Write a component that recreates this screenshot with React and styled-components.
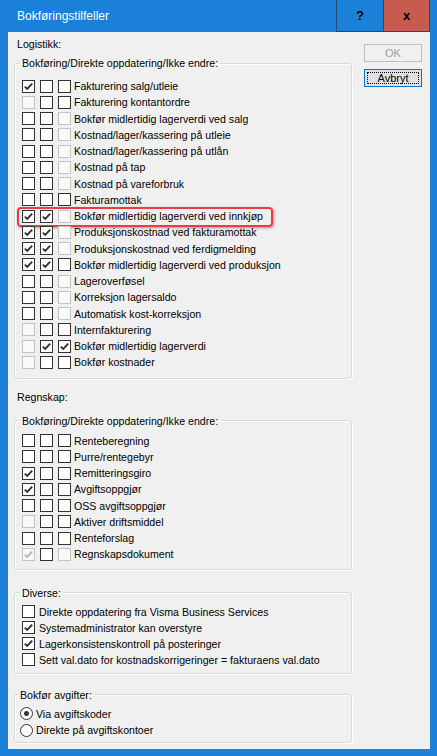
import React from "react";
import styled, { createGlobalStyle } from "styled-components";

const Global = createGlobalStyle`
  html, body { margin: 0; padding: 0; background: #1b80d8; }
  body { font-family: "Liberation Sans", Arial, sans-serif; }
  * { box-sizing: border-box; }
`;

const Window = styled.div`
  width: 437px;
  height: 756px;
  background: #1b80d8;
  display: flex;
  flex-direction: column;
  padding: 0 7px 7px 8px;
`;

const TitleBar = styled.div`
  height: 32px;
  flex: none;
  display: flex;
  align-items: stretch;
  margin-left: -8px;
`;

const Title = styled.div`
  flex: 1;
  color: #fff;
  font-size: 12px;
  padding-left: 17px;
  display: flex;
  align-items: center;
  padding-bottom: 1px;
`;

const CaptionButton = styled.div`
  width: ${(p) => p.$w}px;
  height: 32px;
  background: ${(p) => p.$bg};
  border: 1px solid #1c4d7c;
  border-top: none;
  margin-left: -1px;
  display: flex;
  align-items: center;
  justify-content: center;
  font-weight: bold;
  font-size: 13px;
  color: #000;
`;

const Client = styled.div`
  flex: 1;
  background: #f0f0f0;
  display: flex;
  font-size: 10.6px;
  color: #000;
`;

const LeftCol = styled.div`
  width: 346px;
  padding: 6px 0 0 6px;
  display: flex;
  flex-direction: column;
`;

const RightCol = styled.div`
  flex: 1;
  padding: 12px 8px 0 12px;
  display: flex;
  flex-direction: column;
  gap: 7px;
`;

const Button = styled.div`
  height: 18px;
  width: 58px;
  display: flex;
  align-items: center;
  justify-content: center;
  font-size: 11px;
  border: 1px solid ${(p) => (p.$disabled ? "#bfbfbf" : "#0078d7")};
  background: ${(p) => (p.$disabled ? "#f0f0f0" : "#e1e1e1")};
  color: ${(p) => (p.$disabled ? "#a0a0a0" : "#000")};
  position: relative;
  ${(p) =>
    p.$focused &&
    `&::after { content: ""; position: absolute; inset: 2px; border: 1px dotted #000; }`}
`;

const SectionLabel = styled.div`
  height: 13px;
  line-height: 13px;
  padding-left: 3px;
  margin-top: ${(p) => p.$mt || 0}px;
`;

const Group = styled.fieldset`
  margin: ${(p) => p.$mt || 0}px 0 0 0;
  padding: ${(p) => p.$pt}px 0 ${(p) => p.$pb}px ${(p) => p.$pl}px;
  border: 1px solid #d5dbe0;
  border-radius: 3px;
  box-shadow: inset 1px 1px 0 #fff, 1px 1px 0 #fff;
  min-width: 0;
`;

const Legend = styled.legend`
  padding: 0 2px;
  margin-left: -2px;
  line-height: 14px;
  height: 14px;
`;

const Row = styled.div`
  height: ${(p) => p.$h}px;
  display: flex;
  align-items: center;
  gap: 5px;
  position: relative;
  white-space: nowrap;
  ${(p) =>
    p.$highlight &&
    `&::after {
      content: "";
      position: absolute;
      left: -5px;
      width: 252px;
      top: -1.5px;
      height: 16px;
      border: 2px solid #ee3a43;
      border-radius: 4px;
      box-shadow: 1px 1px 3px rgba(0,0,0,0.35);
      pointer-events: none;
    }`}
`;

const RowText = styled.span`
  margin-left: ${(p) => p.$ml ?? -2}px;
`;

const Box = styled.span`
  width: 13px;
  height: 13px;
  flex: none;
  border: 1px solid ${(p) => (p.$disabled ? "#c3c3c3" : "#333")};
  background: ${(p) => (p.$disabled ? "#f9f9f9" : "#fff")};
  display: flex;
  align-items: center;
  justify-content: center;
`;

const Radio = styled.span`
  width: 13px;
  height: 13px;
  flex: none;
  border-radius: 50%;
  border: 1px solid #333;
  background: #fff;
  display: flex;
  align-items: center;
  justify-content: center;
  &::after {
    content: "";
    width: 5px;
    height: 5px;
    border-radius: 50%;
    background: ${(p) => (p.$checked ? "#333" : "transparent")};
  }
`;

const Check = ({ color }) => (
  <svg width="11" height="11" viewBox="0 0 11 11">
    <path d="M1.8 5.6 L4.2 8 L9.2 2.6" fill="none" stroke={color} strokeWidth="1.9" />
  </svg>
);

const CheckBox = ({ s }) => {
  const disabled = s.startsWith("d");
  const checked = s.endsWith("c");
  return (
    <Box $disabled={disabled}>
      {checked && <Check color={disabled ? "#b8b8b8" : "#333"} />}
    </Box>
  );
};

const logistikk = [
  ["Fakturering salg/utleie", "c e e"],
  ["Fakturering kontantordre", "d e e"],
  ["Bokfør midlertidig lagerverdi ved salg", "e e d"],
  ["Kostnad/lager/kassering på utleie", "e e d"],
  ["Kostnad/lager/kassering på utlån", "e e d"],
  ["Kostnad på tap", "e e d"],
  ["Kostnad på vareforbruk", "e e d"],
  ["Fakturamottak", "e e e"],
  ["Bokfør midlertidig lagerverdi ved innkjøp", "c c d", true],
  ["Produksjonskostnad ved fakturamottak", "c c d"],
  ["Produksjonskostnad ved ferdigmelding", "c c d"],
  ["Bokfør midlertidig lagerverdi ved produksjon", "c c e"],
  ["Lageroverføsel", "e e d"],
  ["Korreksjon lagersaldo", "e e d"],
  ["Automatisk kost-korreksjon", "e e d"],
  ["Internfakturering", "d e e"],
  ["Bokfør midlertidig lagerverdi", "d c c"],
  ["Bokfør kostnader", "d e e"],
];

const regnskap = [
  ["Renteberegning", "e e e"],
  ["Purre/rentegebyr", "e e e"],
  ["Remitteringsgiro", "c e e"],
  ["Avgiftsoppgjør", "c e e"],
  ["OSS avgiftsoppgjør", "e e e"],
  ["Aktiver driftsmiddel", "d e e"],
  ["Renteforslag", "e e e"],
  ["Regnskapsdokument", "dc e d"],
];

const diverse = [
  ["Direkte oppdatering fra Visma Business Services", "e"],
  ["Systemadministrator kan overstyre", "c"],
  ["Lagerkonsistenskontroll på posteringer", "c"],
  ["Sett val.dato for kostnadskorrigeringer = fakturaens val.dato", "e"],
];

const TripleRows = ({ rows }) =>
  rows.map(([label, states, hl]) => (
    <Row key={label} $h={16.25} $highlight={hl}>
      {states.split(" ").map((s, i) => (
        <CheckBox key={i} s={s} />
      ))}
      <RowText>{label}</RowText>
    </Row>
  ));

export default function App() {
  return (
    <>
      <Global />
      <Window>
        <TitleBar>
          <Title>Bokføringstilfeller</Title>
          <CaptionButton $w={48} $bg="#1b80d8">?</CaptionButton>
          <CaptionButton $w={47} $bg="#c75b50">x</CaptionButton>
        </TitleBar>
        <Client>
          <LeftCol>
            <SectionLabel>Logistikk:</SectionLabel>
            <Group $mt={5} $pt={8} $pb={7} $pl={7}>
              <Legend>Bokføring/Direkte oppdatering/Ikke endre:</Legend>
              <TripleRows rows={logistikk} />
            </Group>
            <SectionLabel $mt={12}>Regnskap:</SectionLabel>
            <Group $mt={10} $pt={5} $pb={6} $pl={7}>
              <Legend>Bokføring/Direkte oppdatering/Ikke endre:</Legend>
              <TripleRows rows={regnskap} />
            </Group>
            <Group $mt={16} $pt={4} $pb={5} $pl={7}>
              <Legend>Diverse:</Legend>
              {diverse.map(([label, s]) => (
                <Row key={label} $h={16}>
                  <CheckBox s={s} />
                  <RowText $ml={-1}>{label}</RowText>
                </Row>
              ))}
            </Group>
            <Group $mt={14} $pt={4} $pb={3} $pl={5}>
              <Legend>Bokfør avgifter:</Legend>
              <Row $h={16.5}>
                <Radio $checked />
                <RowText>Via avgiftskoder</RowText>
              </Row>
              <Row $h={16.5}>
                <Radio />
                <RowText>Direkte på avgiftskontoer</RowText>
              </Row>
            </Group>
          </LeftCol>
          <RightCol>
            <Button $disabled>OK</Button>
            <Button $focused>Avbryt</Button>
          </RightCol>
        </Client>
      </Window>
    </>
  );
}
